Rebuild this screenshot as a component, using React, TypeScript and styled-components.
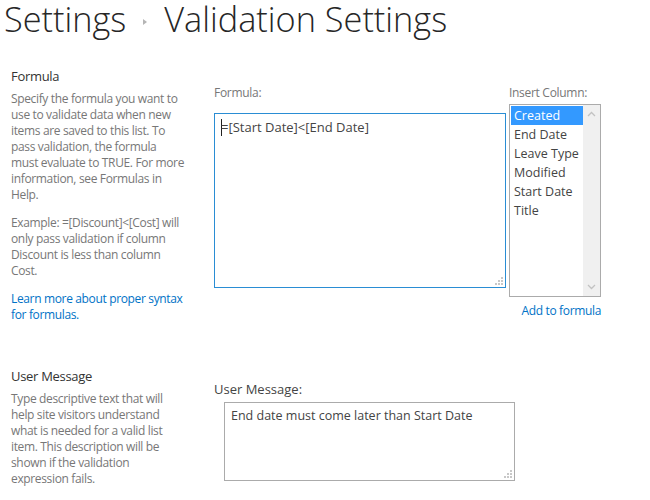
import React from 'react'
import { styled, createGlobalStyle } from 'styled-components'

const GlobalStyle = createGlobalStyle`
  body {
    margin: 0;
    background: #fff;
    font-family: "Open Sans", "Noto Sans", sans-serif;
  }
`;

const columns = ['Created', 'End Date', 'Leave Type', 'Modified', 'Start Date', 'Title'];

const Grip = () => (
  <GripIcon width="9" height="9" viewBox="0 0 9 9">
    <rect x="7" y="1" width="2" height="2" fill="#c8c8c8" />
    <rect x="4" y="4" width="2" height="2" fill="#c8c8c8" />
    <rect x="7" y="4" width="2" height="2" fill="#c8c8c8" />
    <rect x="1" y="7" width="2" height="2" fill="#c8c8c8" />
    <rect x="4" y="7" width="2" height="2" fill="#c8c8c8" />
    <rect x="7" y="7" width="2" height="2" fill="#c8c8c8" />
  </GripIcon>
);

const App = () => {
  return (
    <>
      <GlobalStyle />
      <Page>
        <PageTitle>
          <span>Settings</span>
          <CrumbArrow />
          <span>Validation Settings</span>
        </PageTitle>

        <Section>
          <Info>
            <InfoTitle>Formula</InfoTitle>
            <Description>
              Specify the formula you want to<br />
              use to validate data when new<br />
              items are saved to this list. To<br />
              pass validation, the formula<br />
              must evaluate to TRUE. For more<br />
              information, see Formulas in<br />
              Help.
            </Description>
            <Description>
              Example: =[Discount]&lt;[Cost] will<br />
              only pass validation if column<br />
              Discount is less than column<br />
              Cost.
            </Description>
            <InfoLink href="#">
              Learn more about proper syntax<br />
              for formulas.
            </InfoLink>
          </Info>

          <FormulaFields>
            <Field>
              <FieldLabel>Formula:</FieldLabel>
              <TextBox $focused $width={292} $height={175} $gap={12}>
                <Caret />=[Start Date]&lt;[End Date]
                <Grip />
              </TextBox>
            </Field>
            <Field>
              <FieldLabel>Insert Column:</FieldLabel>
              <ListBox>
                <ListItems>
                  {columns.map((c, i) => (
                    <ListItem key={c} $selected={i === 0}>{c}</ListItem>
                  ))}
                </ListItems>
                <ScrollTrack>
                  <ScrollArrow viewBox="0 0 9 6">
                    <path d="M1 5 L4.5 1.5 L8 5" />
                  </ScrollArrow>
                  <ScrollArrow viewBox="0 0 9 6">
                    <path d="M1 1 L4.5 4.5 L8 1" />
                  </ScrollArrow>
                </ScrollTrack>
              </ListBox>
              <AddLink href="#">Add to formula</AddLink>
            </Field>
          </FormulaFields>
        </Section>

        <Section $top={45}>
          <Info>
            <InfoTitle>User Message</InfoTitle>
            <Description>
              Type descriptive text that will<br />
              help site visitors understand<br />
              what is needed for a valid list<br />
              item. This description will be<br />
              shown if the validation<br />
              expression fails.
            </Description>
          </Info>

          <MessageField>
            <FieldLabel $dark>User Message:</FieldLabel>
            <TextBox $width={291} $height={79} $gap={5} $indent={10} $size={12.5}>
              End date must come later than Start Date
              <Grip />
            </TextBox>
          </MessageField>
        </Section>
      </Page>
    </>
  );
};

const Page = styled.div`
  width: 650px;
  height: 500px;
  overflow: hidden;
  box-sizing: border-box;
`;

const PageTitle = styled.h1`
  display: flex;
  align-items: center;
  gap: 17px;
  margin: 0;
  padding: 0 0 0 4px;
  font-size: 34.3px;
  font-weight: 300;
  line-height: 38px;
  color: #262626;
`;

const CrumbArrow = styled.span`
  width: 0;
  height: 0;
  margin-top: 5px;
  border-top: 3.5px solid transparent;
  border-bottom: 3.5px solid transparent;
  border-left: 4px solid #b5b5b5;
`;

const Section = styled.section<{ $top?: number }>`
  display: grid;
  grid-template-columns: 203px 1fr;
  padding-left: 11px;
  margin-top: ${(p) => p.$top ?? 30}px;
  font-size: 12px;
  letter-spacing: -0.35px;
  line-height: 16px;
`;

const Info = styled.div`
  display: flex;
  flex-direction: column;
`;

const InfoTitle = styled.h3`
  margin: 0 0 7px;
  font-size: 13px;
  font-weight: 400;
  letter-spacing: -0.3px;
  line-height: 16px;
  color: #333;
`;

const Description = styled.p`
  margin: 0 0 12px;
  color: #777;
  white-space: nowrap;
`;

const InfoLink = styled.a`
  color: #0072c6;
  text-decoration: none;
  line-height: 16px;
  white-space: nowrap;
`;

const FormulaFields = styled.div`
  display: flex;
  gap: 3px;
  padding-top: 17px;
`;

const Field = styled.div`
  display: flex;
  flex-direction: column;
`;

const MessageField = styled.div`
  display: flex;
  flex-direction: column;
  padding-top: 13px;
`;

const FieldLabel = styled.label<{ $dark?: boolean }>`
  font-size: ${(p) => (p.$dark ? 13 : 12)}px;
  letter-spacing: ${(p) => (p.$dark ? 0 : -0.3)}px;
  color: ${(p) => (p.$dark ? '#444' : '#777')};
`;

const TextBox = styled.div<{ $focused?: boolean; $width: number; $height: number; $gap: number; $indent?: number; $size?: number }>`
  position: relative;
  box-sizing: border-box;
  width: ${(p) => p.$width}px;
  height: ${(p) => p.$height}px;
  margin: ${(p) => p.$gap}px 0 0 ${(p) => p.$indent ?? 0}px;
  padding: 4px 6px;
  border: 1px solid ${(p) => (p.$focused ? '#2a8dd4' : '#ababab')};
  font-size: ${(p) => p.$size ?? 13}px;
  letter-spacing: 0;
  line-height: 18px;
  color: #444;
  background: #fff;
`;

const Caret = styled.span`
  display: inline-block;
  width: 1px;
  height: 17px;
  margin-right: -1px;
  vertical-align: -4px;
  background: #222;
`;

const GripIcon = styled.svg`
  position: absolute;
  right: 2px;
  bottom: 2px;
`;

const ListBox = styled.div`
  display: flex;
  box-sizing: border-box;
  width: 92px;
  height: 193px;
  margin-top: 3px;
  border: 1px solid #ababab;
  background: #fff;
`;

const ListItems = styled.ul`
  flex: 1;
  margin: 0;
  padding: 1px 0 0 1px;
  list-style: none;
`;

const ListItem = styled.li<{ $selected?: boolean }>`
  height: 19px;
  padding-left: 3px;
  font-size: 12.5px;
  letter-spacing: 0;
  line-height: 19px;
  white-space: nowrap;
  color: ${(p) => (p.$selected ? '#fff' : '#444')};
  background: ${(p) => (p.$selected ? '#3399ff' : 'transparent')};
`;

const ScrollTrack = styled.div`
  display: flex;
  flex-direction: column;
  justify-content: space-between;
  align-items: center;
  width: 17px;
  padding: 6px 0;
  box-sizing: border-box;
  background: #f0f0f0;
`;

const ScrollArrow = styled.svg`
  width: 9px;
  height: 6px;
  fill: none;
  stroke: #c2c2c2;
  stroke-width: 1.3;
`;

const AddLink = styled.a`
  align-self: flex-end;
  margin-top: 6px;
  color: #0072c6;
  text-decoration: none;
`;

export default App;
